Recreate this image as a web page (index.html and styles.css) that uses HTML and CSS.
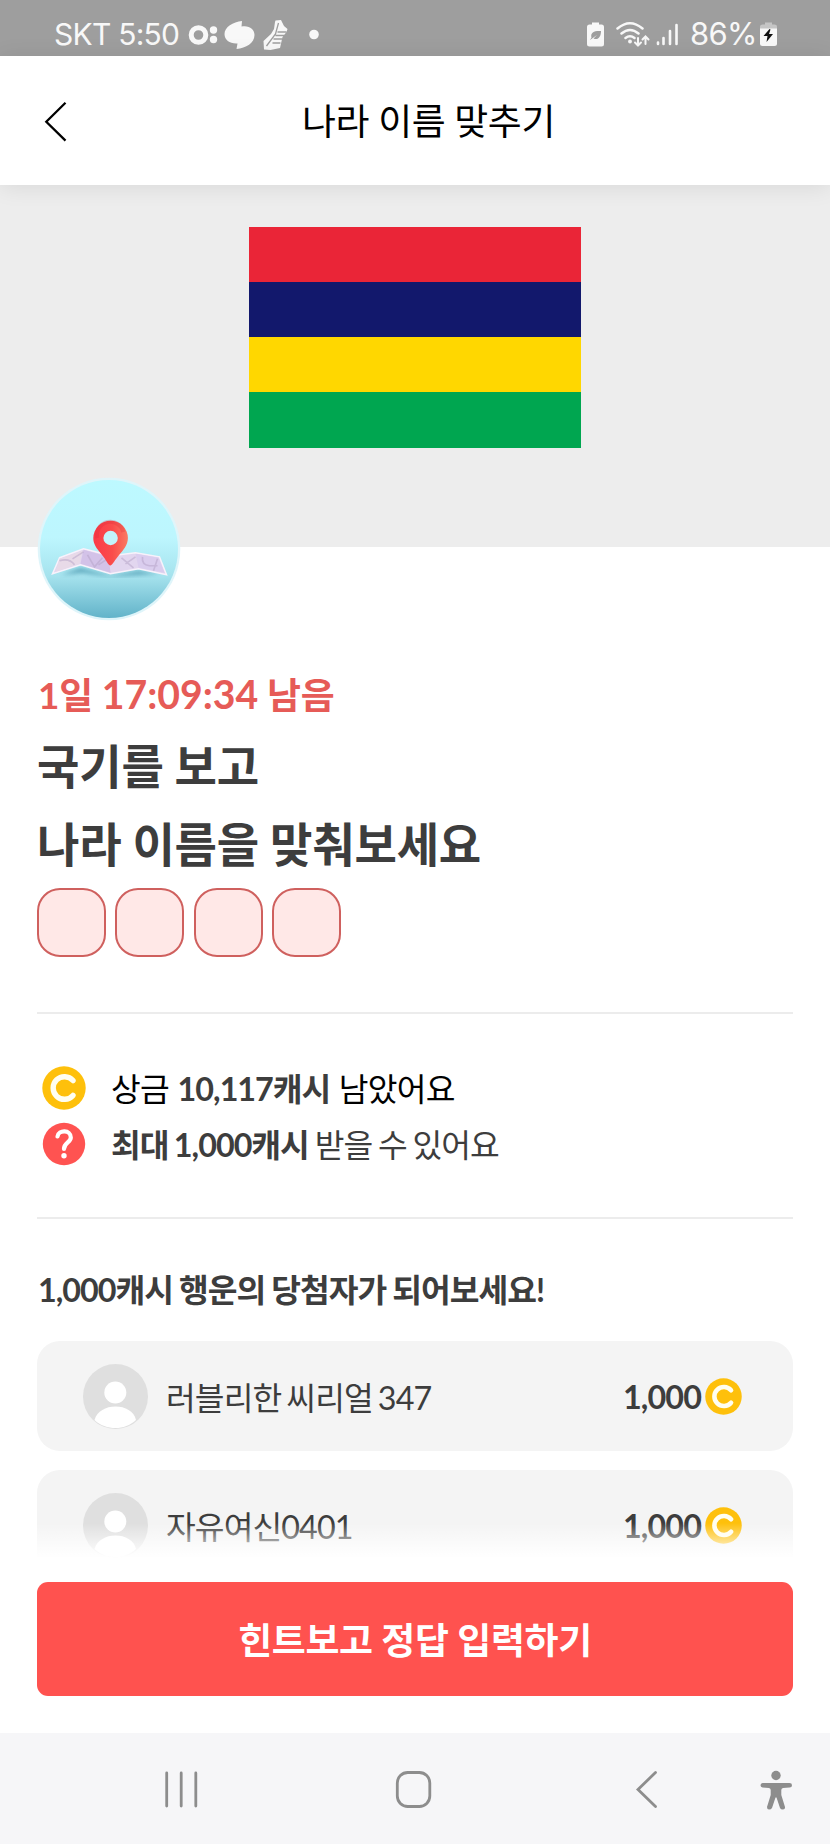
FILE: index.html
```html
<!DOCTYPE html>
<html lang="ko">
<head>
<meta charset="utf-8">
<title>나라 이름 맞추기</title>
<link rel="stylesheet" href="styles.css">
</head>
<body>
<svg class="defs" width="0" height="0" aria-hidden="true">
  <symbol id="coin" viewBox="0 0 44 44"><circle cx="22" cy="22" r="21.7" fill="#fec00b"/><path d="M31 14.6A11.3 11.3 0 1 0 31 29.4" fill="none" stroke="#fffef0" stroke-width="5.4" stroke-linecap="round"/></symbol>
  <symbol id="avatar" viewBox="0 0 65 65"><circle cx="32.5" cy="32.5" r="32.5" fill="#dfdfdf"/><circle cx="32.3" cy="28.5" r="11" fill="#fff"/><path d="M11.500 56C14 47 23 42.500 32.500 42.500S51 47 53 56C47 61.500 40 64 32.500 64S17 61.500 11.500 56Z" fill="#fff"/></symbol>
</svg>
<div class="screen">
  <div class="status">
    <div class="status-left">
      <span class="status-text">SKT 5:50</span>
      <svg class="notif" width="134" height="34" viewBox="0 0 134 34" fill="#f8f8f8">
        <circle cx="10.500" cy="18" r="7.300" fill="none" stroke="#f8f8f8" stroke-width="5"/>
        <circle cx="25.500" cy="13" r="3.700"/><circle cx="25.500" cy="22.500" r="3.700"/>
        <path d="M54 4C45 5 36.500 10 36.500 17C36.500 23 42 27 49.500 26.500L48.500 32C58 31 66.500 26 66.500 18C66.500 12 61 8 53.500 9.500Z"/>
        <path d="M87.500 3.500L93 3L96 9L99.500 12L98.500 15L94.500 20L92 31L82.500 33L76 32.500L75.500 24L83 17L86 12L87 5Z"/>
        <path d="M78.500 29L87.500 17L90.500 6M89.500 15H98.500M87.500 18.500H96.500M85.500 22H94.500M84.500 26H92.500" fill="none" stroke="#9e9e9e" stroke-width="1.300"/>
        <circle cx="126" cy="17.500" r="4.800"/>
      </svg>
    </div>
    <div class="status-right">
      <svg class="signals" width="92" height="34" viewBox="0 0 92 34" fill="none" stroke="#f8f8f8" stroke-linecap="round">
        <path d="M5 5.500V3.500H12V5.500H14.500Q17 5.500 17 8V25Q17 27.500 14.500 27.500H2.500Q0 27.500 0 25V8Q0 5.500 2.500 5.500Z" fill="#f8f8f8" stroke="none"/>
        <path d="M3 21L4.500 18.500C3 13 8 11.500 14 12C14 18 11 21.500 6.500 19.500L10 16Z" fill="#9e9e9e" stroke="none"/>
        <path d="M30.500 9.500Q43 -1 55.500 9.500M34.500 14.500Q43 7.500 51.500 14.500M38.500 19Q43 15.500 47.500 19" stroke-width="2.500"/>
        <circle cx="43" cy="22.500" r="1.900" fill="#f8f8f8" stroke="none"/>
        <path d="M51 19V26.500M48 23.500L51 26.500L54 23.500M58.500 25V17.500M55.500 20.500L58.500 17.500L61.500 20.500" stroke-width="2"/>
        <path d="M71 23.500V25M76.500 19V25M83 12V25M89.500 6V25" stroke-width="2.600"/>
      </svg>
      <span class="status-text percent">86%</span>
      <svg class="battery" width="17" height="34" viewBox="0 0 17 34"><path d="M5 7V3.500H12V7Z M0 10V7.500Q0 5.500 2.500 5.500H14.500Q17 5.500 17 7.500V10Z" fill="#c5c5c5"/><path d="M0 9.500H17V24.500Q17 27 14.500 27H2.500Q0 27 0 24.500Z" fill="#f8f8f8"/><path d="M9.500 10L3.500 17H7.500L6.500 23L13 15H9L10.500 10.500Z" fill="#111"/></svg>
    </div>
  </div>
  <header class="header">
    <svg class="back" width="24" height="42" viewBox="0 0 24 42"><path d="M21.500 1.800L2.300 20.700L21.500 39.600" fill="none" stroke="#000" stroke-width="2.300"/></svg>
    <h1>나라 이름 맞추기</h1>
  </header>
  <section class="hero">
    <div class="flag"><i class="red"></i><i class="navy"></i><i class="yellow"></i><i class="green"></i></div>
    <svg class="badge" width="144" height="144" viewBox="0 0 144 144">
      <defs>
        <linearGradient id="sky" x1="0" y1="0" x2="0" y2="1"><stop offset="0" stop-color="#bdf9ff"/><stop offset=".42" stop-color="#bdf6fe"/><stop offset=".7" stop-color="#a5e2ed"/><stop offset="1" stop-color="#62b3c9"/></linearGradient>
        <linearGradient id="pin" x1="0" y1="0" x2="1" y2="0"><stop offset="0" stop-color="#fb3a47"/><stop offset=".55" stop-color="#fa4c4b"/><stop offset="1" stop-color="#fa7a63"/></linearGradient>
        <filter id="soft"><feGaussianBlur stdDeviation="2"/></filter>
      </defs>
      <circle cx="72" cy="72" r="71.300" fill="#dff5fa"/>
      <circle cx="72" cy="72" r="69" fill="url(#sky)"/>
      <g transform="translate(.5 1.800)">
        <path d="M24 96L43 89L73 97L101 92L122 95L73 98L45 94Z" fill="#3f8fa8" opacity=".7" filter="url(#soft)"/>
        <path d="M22 79L46 70L74 77L98 74L122 78L129 96L101 90L73 95L43 86L15 95Z" fill="#e2d6ef" stroke="#f8f2fb" stroke-width="1.500"/>
        <path d="M46 71L71 78L73 94L43 85Z" fill="#d3c2e8"/><path d="M98 75L121 79L127 94L101 89Z" fill="#dacdee"/><path d="M22 80L45 72L42 85L18 93Z" fill="#e8dae8"/>
        <path d="M22 82Q32 79 37 86M35 80L46 73M50 76L57 88L65 79M61 86L70 80M84 79L96 89M88 85L98 78M105 78Q104 86 112 87H120M120 80L116 92" fill="none" stroke="#b4a2c6" stroke-width="1.600" opacity=".5"/>
      </g>
      <g transform="translate(.3 1)">
        <path d="M73 87.500C71 87.500 69 82 64 76C59 70 56 66 56 60A17.300 17.300 0 1 1 90.600 60C90.600 67 86 72 81 78C76 84 75 87.500 73 87.500Z" fill="url(#pin)"/>
        <path d="M60 60A13.300 13.300 0 0 1 86 54" fill="none" stroke="#d92736" stroke-width="4" opacity=".25"/>
        <circle cx="73.300" cy="60" r="7.200" fill="#c2f4fb"/>
      </g>
    </svg>
  </section>
  <main class="content">
    <p class="timer">1일 <span class="clock">17:09:34</span> 남음</p>
    <h2 class="question">국기를 보고<br>나라 이름을 맞춰보세요</h2>
    <div class="slots"><i></i><i></i><i></i><i></i></div>
    <div class="prizes">
      <p class="prize first"><svg width="44" height="44"><use href="#coin"/></svg><span>상금 <b>10,117캐시</b> 남았어요</span></p>
      <p class="prize second"><svg width="44" height="44" viewBox="0 0 44 44"><circle cx="22" cy="22" r="21.200" fill="#ff5351"/><path d="M15.500 14.500C16.500 7.500 28.800 7.500 28.800 15.500C28.800 20.500 22 20.500 22 27" fill="none" stroke="#fff" stroke-width="4.200" stroke-linecap="round"/><circle cx="22" cy="33.800" r="2.700" fill="#fff"/></svg><span><b>최대 1,000캐시</b> 받을 수 있어요</span></p>
    </div>
    <h3 class="winners-title">1,000캐시 행운의 당첨자가 되어보세요!</h3>
    <div class="winners">
      <div class="card"><svg width="65" height="65"><use href="#avatar"/></svg><span class="name">러블리한 씨리얼 347</span><b class="amount">1,000</b><svg width="37" height="37"><use href="#coin"/></svg></div>
      <div class="card"><svg width="65" height="65"><use href="#avatar"/></svg><span class="name">자유여신0401</span><b class="amount">1,000</b><svg width="37" height="37"><use href="#coin"/></svg></div>
    </div>
  </main>
  <div class="action"><button class="cta">힌트보고 정답 입력하기</button></div>
  <nav class="nav">
    <svg width="830" height="111" viewBox="0 0 830 111" fill="none" stroke="#8d8d8d" stroke-width="2.800" stroke-linecap="round">
      <path d="M166.700 40V73M181.200 40V73M195.800 40V73"/>
      <rect x="397.300" y="39.500" width="32.500" height="34" rx="10.500"/>
      <path d="M655.500 39.500L638 56.500L655.500 73.500"/>
      <g fill="#8d8d8d" stroke="none"><circle cx="776" cy="42.500" r="4.700"/><path d="M762.500 50H789.500Q792 50 792 52.300T789.500 54.500L783 55Q781.300 55.300 781.300 57V62L785 74Q785.300 76.500 783 76.500T780 75L776.500 64.500H775.500L772 75Q771 76.500 769 76.500T767 74L770.700 62V57Q770.700 55.300 769 55L762.500 54.500Q760.500 54 760.500 52.300T762.500 50Z"/></g>
    </svg>
  </nav>
</div>
</body>
</html>
```
FILE: styles.css
```css
* { box-sizing: border-box; margin: 0; padding: 0; }
body { font-family: Lato, "Noto Sans CJK KR", sans-serif; background: #fff; color: #3d3d3d; }
.defs { display: none; }
.screen { width: 830px; height: 1844px; display: flex; flex-direction: column; overflow: hidden; }
.status { height: 56px; flex: none; background: #9e9e9e; color: #f8f8f8; display: flex; justify-content: space-between; padding: 17px 53px 0 54px; }
.status-left, .status-right { display: flex; align-items: flex-start; }
.status-text { font: 400 30px/34px Inter, sans-serif; letter-spacing: -.75px; white-space: nowrap; }
.notif { margin-left: 9px; }
.signals { margin: 2px 11px 0 0; }
.percent { width: 66px; margin-right: 4px; font-size: 31px; }
.battery { margin-top: 2px; }
.header { height: 129px; flex: none; display: flex; align-items: center; justify-content: center; position: relative; z-index: 1; background: #fff; box-shadow: 0 2px 22px rgba(0,0,0,.09); }
.back { position: absolute; left: 44px; top: 45px; }
.header h1 { font-weight: 400; font-size: 36.9px; line-height: 54px; letter-spacing: -.4px; color: #000; padding-left: 27px; }
.hero { height: 362px; flex: none; background: #ededed; display: flex; justify-content: center; padding-top: 41.500px; position: relative; }
.flag { width: 332px; height: 221px; display: flex; flex-direction: column; }
.flag i { flex: 1; }
.red { background: #ea2537; }
.navy { background: #12186c; }
.yellow { background: #ffd700; }
.green { background: #00a650; }
.badge { position: absolute; left: 36.500px; top: 292px; }
.content { height: 1013px; flex: none; padding: 121px 37px 0; display: flex; flex-direction: column; }
.timer { font-weight: 700; font-size: 36.900px; line-height: 54px; height: 54px; letter-spacing: -.2px; color: #e65b57; padding-left: 1px; }
.clock { font-size: 39.200px; letter-spacing: 0; line-height: 1; }
.question { font-weight: 700; font-size: 46.100px; line-height: 77.500px; letter-spacing: -.2px; margin-top: 6px; }
.slots { display: flex; gap: 9.400px; margin-top: 5px; }
.slots i { width: 69px; height: 69px; border: 2px solid #cf605e; border-radius: 23px; background: #ffe8e7; }
.prizes { margin-top: 55px; height: 207px; border-top: 2px solid #ececec; border-bottom: 2px solid #ececec; padding-top: 46px; }
.prize { display: flex; align-items: center; height: 56px; padding-left: 5px; gap: 25px; font-size: 32.300px; }
.prize span { position: relative; top: -1px; }
.first { color: #000; letter-spacing: -.7px; word-spacing: 1px; }
.second { letter-spacing: -1px; word-spacing: -1.400px; }
.prize b { color: #3d3d3d; letter-spacing: -1px; }
.winners-title { font-weight: 700; font-size: 32.300px; line-height: 48px; letter-spacing: -1px; word-spacing: -.7px; margin-top: 47px; padding-left: 1px; }
.winners { margin-top: 27px; height: 219px; flex: none; overflow: hidden; display: flex; flex-direction: column; gap: 19px; position: relative; }
.winners::after { content: ""; position: absolute; left: 0; right: 0; bottom: 0; height: 37px; background: linear-gradient(rgba(255,255,255,0), #fff 95%); }
.card { height: 110px; flex: none; border-radius: 23px; background: #f4f4f4; display: flex; align-items: center; padding: 0 51px 0 46px; font-size: 32.300px; letter-spacing: -.9px; }
.name { margin-left: 18px; flex: 1; word-spacing: -2.300px; }
.amount { margin-right: 4px; }
.action { height: 173px; flex: none; padding: 22px 37px 0; }
.cta { width: 756px; height: 114px; border: 0; border-radius: 11px; padding-top: 2px; background: #ff524f; color: #fff; font: 700 36.900px/54px Lato, "Noto Sans CJK KR", sans-serif; letter-spacing: -.3px; }
.nav { height: 111px; flex: none; background: #f6f6f8; }
.nav svg { display: block; }
```
